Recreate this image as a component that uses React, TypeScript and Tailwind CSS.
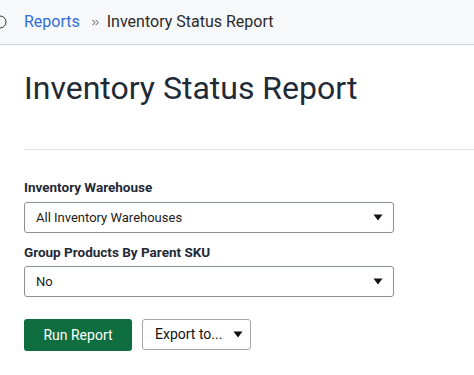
import { ChevronsRight } from "lucide-react";

const Caret = () => (
  <svg width="10" height="7" viewBox="0 0 10 7" className="shrink-0">
    <path d="M0.5 0.5 L9.5 0.5 L5 6.5 Z" fill="#111" />
  </svg>
);

const SelectBox = ({ value }: { value: string }) => (
  <div className="flex h-[31px] w-[370px] items-center justify-between rounded-[3px] border border-[#8a8f98] bg-white pl-[11px] pr-[10px] text-[13px] text-[#1c1c1c]">
    <span>{value}</span>
    <Caret />
  </div>
);

export default function App() {
  return (
    <div className="min-h-screen bg-white font-['Roboto',sans-serif]">
      {/* breadcrumb bar */}
      <div className="flex h-[45px] items-center border-b border-[#c9d5e2] bg-[#f7f8fa]">
        <svg width="14" height="14" viewBox="0 0 14 14" className="-ml-[7px] mr-[17px]">
          <circle cx="7" cy="7" r="6" fill="none" stroke="#333" strokeWidth="1" />
        </svg>
        <span className="text-[16px] text-[#2f6fd6]">Reports</span>
        <ChevronsRight size={11} strokeWidth={2.2} className="ml-[10px] mr-[6px] text-[#777]" />
        <span className="text-[16px] text-[#2b2b2b]">Inventory Status Report</span>
      </div>

      <div className="pl-[24px]">
        <h1 className="pt-[23px] text-[32px] leading-[40px] text-[#1f2a37]">Inventory Status Report</h1>
        <div className="mt-[41px] border-t border-[#e2e2e2]" />

        <div className="mt-[29px] text-[13.5px] font-bold leading-[17px] text-[#1f2a37]">Inventory Warehouse</div>
        <div className="mt-[6px]">
          <SelectBox value="All Inventory Warehouses" />
        </div>

        <div className="mt-[11px] text-[13.5px] font-bold leading-[17px] text-[#1f2a37]">Group Products By Parent SKU</div>
        <div className="mt-[5px]">
          <SelectBox value="No" />
        </div>

        <div className="mt-[22px] flex gap-[10px]">
          <button className="h-[32px] w-[108px] rounded-[3px] bg-[#0e6e40] text-[14px] text-white">Run Report</button>
          <button className="flex h-[31px] w-[109px] items-center gap-[11px] rounded-[3px] border border-[#a7a7a7] bg-white pl-[12px] text-[14px] text-[#111]">
            <span>Export to...</span>
            <Caret />
          </button>
        </div>
      </div>
    </div>
  );
}
